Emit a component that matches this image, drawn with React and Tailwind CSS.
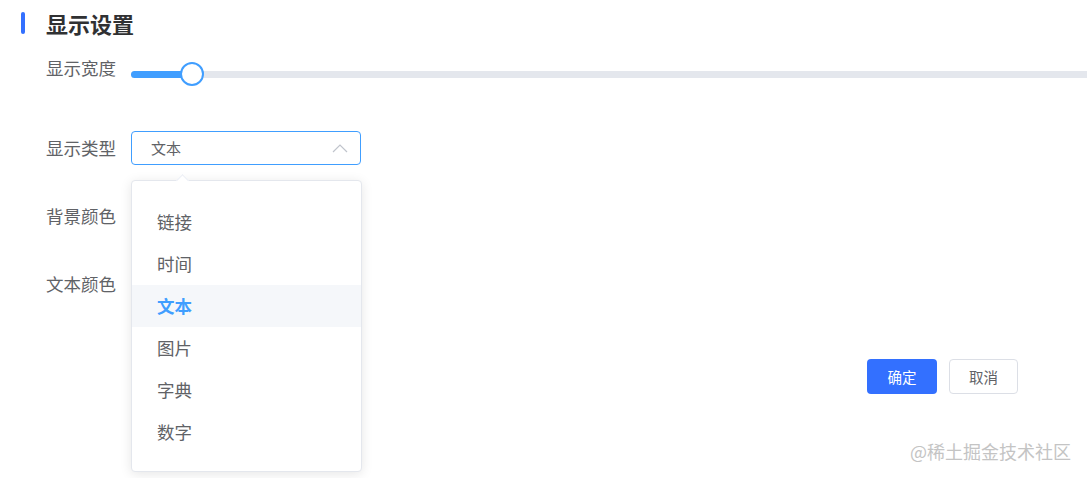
const options = ['链接', '时间', '文本', '图片', '字典', '数字'];

function FormLabel({ children }) {
  return (
    <div className="w-[85px] shrink-0 text-[17.5px] leading-[24px] text-[#606266]">{children}</div>
  );
}

export default function App() {
  const selected = '文本';

  return (
    <div
      className="relative w-[1087px] h-[478px] overflow-hidden bg-white"
      style={{ fontFamily: '"Noto Sans CJK SC", "Noto Sans", sans-serif' }}
    >
      {/* header */}
      <div className="flex items-center h-[46px] pl-[21px]">
        <div className="w-[4px] h-[22px] rounded-full bg-[#3370ff]" />
        <h2 className="ml-[21px] text-[22px] font-bold text-[#303133] leading-none">显示设置</h2>
      </div>

      <div className="pl-[46px]">
        {/* width slider */}
        <div className="flex items-start mt-[10px] -mr-[30px]">
          <FormLabel>显示宽度</FormLabel>
          <div className="flex-1 pt-[6px]">
            <div className="relative h-[24px] flex items-center">
              <div className="w-full h-[7px] rounded-full bg-[#e4e7ed]">
                <div className="w-[61px] h-full rounded-full bg-[#409eff]" />
              </div>
              <div className="absolute left-[49px] top-0 w-[24px] h-[24px] rounded-full border-2 border-[#409eff] bg-white" />
            </div>
          </div>
        </div>

        {/* type select */}
        <div className="flex items-center mt-[45px] h-[34px]">
          <FormLabel>显示类型</FormLabel>
          <div className="w-[230px] h-[34px] flex items-center justify-between rounded border border-[#409eff] pl-[19px] pr-[12px]">
            <span className="text-[15px] text-[#606266]">{selected}</span>
            <svg width="16" height="9" viewBox="0 0 16 9" fill="none">
              <polyline points="1,8 8,1 15,8" stroke="#c0c4cc" strokeWidth="1.2" />
            </svg>
          </div>
        </div>

        <div className="flex items-start mt-[39px]">
          <FormLabel>背景颜色</FormLabel>
        </div>

        <div className="flex items-start mt-[44px]">
          <FormLabel>文本颜色</FormLabel>
        </div>
      </div>

      {/* actions */}
      <div className="flex justify-end gap-[12px] mt-[63px] pr-[69px]">
        <button className="w-[70px] h-[35px] rounded bg-[#3370ff] text-white text-[14.5px]">确定</button>
        <button className="w-[69px] h-[35px] rounded border border-[#dcdfe6] bg-white text-[#606266] text-[14.5px]">
          取消
        </button>
      </div>

      {/* dropdown popover */}
      <div className="absolute left-[131px] top-[180px] w-[231px] h-[292px] rounded border border-[#e4e7ed] bg-white shadow-[0_2px_12px_rgba(0,0,0,0.1)] py-[20px]">
        <div className="absolute -top-[5px] left-[46px] w-[9px] h-[9px] rotate-45 bg-white border-l border-t border-[#ebeef5]" />
        {options.map((opt) => (
          <div
            key={opt}
            className={
              opt === selected
                ? 'h-[42px] flex items-center pl-[25px] bg-[#f5f7fa] text-[17.5px] font-bold text-[#409eff]'
                : 'h-[42px] flex items-center pl-[25px] text-[17.5px] text-[#606266]'
            }
          >
            {opt}
          </div>
        ))}
      </div>

      {/* watermark */}
      <div className="absolute left-[910px] top-[439px] text-[18px] leading-[24px] text-[#c4c4c4]">@稀土掘金技术社区</div>
    </div>
  );
}
